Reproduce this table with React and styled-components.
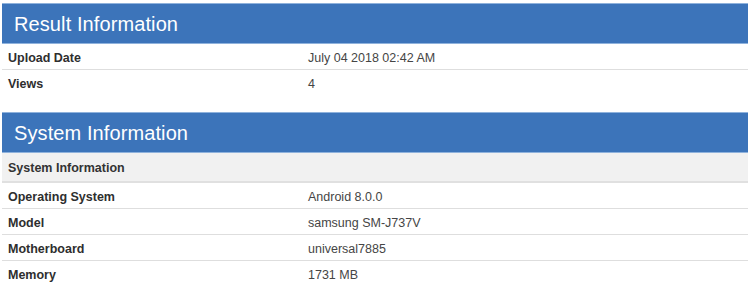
import React from "react";
import styled, { createGlobalStyle } from "styled-components";

const GlobalStyle = createGlobalStyle`
    body {
        margin: 0;
        background: #ffffff;
        font-family: "Liberation Sans", Arial, sans-serif;
    }
`;

const Page = styled.div`
    width: 750px;
    height: 285px;
    overflow: hidden;
    padding: 3px 2px 0 2px;
    box-sizing: border-box;
    background: #ffffff;
`;

const Section = styled.section`
    margin-bottom: ${({ gap }) => gap || 0}px;
`;

const Header = styled.h2`
    margin: 0;
    height: 41px;
    box-sizing: border-box;
    display: flex;
    align-items: center;
    padding: 1px 12px 0;
    background: #3c74ba;
    border-top: 1px solid #8fb2dc;
    border-bottom: 1px solid #8fb2dc;
    color: #ffffff;
    font-size: 20px;
    font-weight: normal;
    letter-spacing: 0.1px;
`;

const SubHeader = styled.div`
    height: 30px;
    box-sizing: border-box;
    display: flex;
    align-items: center;
    padding: 1px 6px 0;
    background: #f1f1f1;
    border-bottom: 2px solid #e0e0e0;
    color: #333333;
    font-size: 12.5px;
    font-weight: bold;
`;

const Row = styled.div`
    display: grid;
    grid-template-columns: 300px 1fr;
    align-items: center;
    height: 26px;
    box-sizing: border-box;
    padding: 2px 6px 0;
    border-bottom: 1px solid ${({ last }) => (last ? "transparent" : "#dedede")};
    font-size: 12.5px;
`;

const Label = styled.div`
    color: #2e2e2e;
    font-weight: bold;
`;

const Value = styled.div`
    color: #454545;
`;

const resultRows = [
    ["Upload Date", "July 04 2018 02:42 AM"],
    ["Views", "4"],
];

const systemRows = [
    ["Operating System", "Android 8.0.0"],
    ["Model", "samsung SM-J737V"],
    ["Motherboard", "universal7885"],
    ["Memory", "1731 MB"],
];

export default function App() {
    return (
        <>
            <GlobalStyle />
            <Page>
                <Section gap={16}>
                    <Header>Result Information</Header>
                    {resultRows.map(([label, value], i) => (
                        <Row key={label} last={i === resultRows.length - 1}>
                            <Label>{label}</Label>
                            <Value>{value}</Value>
                        </Row>
                    ))}
                </Section>
                <Section>
                    <Header>System Information</Header>
                    <SubHeader>System Information</SubHeader>
                    {systemRows.map(([label, value], i) => (
                        <Row key={label} last={i === systemRows.length - 1}>
                            <Label>{label}</Label>
                            <Value>{value}</Value>
                        </Row>
                    ))}
                </Section>
            </Page>
        </>
    );
}
